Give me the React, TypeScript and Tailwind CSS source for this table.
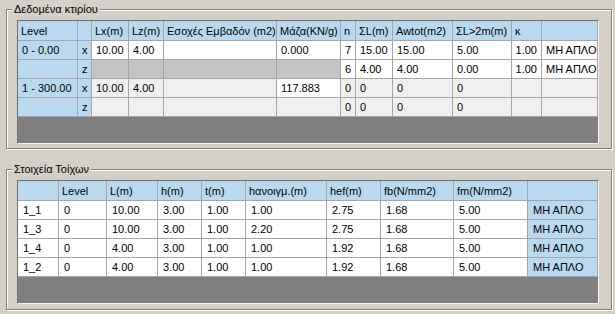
const BLUE = "bg-[#b9d9f1]";
const WHITE = "bg-white";
const GRAY = "bg-[#c4c4c4]";
const LIGHT = "bg-[#f0f0f0]";

type C = { t?: string; bg: string; right?: boolean };

const levelCols = [
  "w-[60px]",
  "w-[14px]",
  "w-[37px]",
  "w-[35px]",
  "w-[113px]",
  "w-[64px]",
  "w-[15px]",
  "w-[37px]",
  "w-[60px]",
  "w-[59px]",
  "w-[30px]",
  "w-[56px]",
];

const levelHead = ["Level", "", "Lx(m)", "Lz(m)", "Εσοχές Εμβαδόν (m2)", "Μάζα(KN/g)", "n", "ΣL(m)", "Awtot(m2)", "ΣL>2m(m)", "κ", ""];

const levelRows: C[][] = [
  [
    { t: "0 - 0.00", bg: BLUE },
    { t: "x", bg: BLUE },
    { t: "10.00", bg: WHITE },
    { t: "4.00", bg: WHITE },
    { bg: WHITE },
    { t: "0.000", bg: WHITE },
    { t: "7", bg: WHITE },
    { t: "15.00", bg: WHITE },
    { t: "15.00", bg: WHITE },
    { t: "5.00", bg: WHITE },
    { t: "1.00", bg: WHITE, right: true },
    { t: "ΜΗ ΑΠΛΟ", bg: WHITE },
  ],
  [
    { bg: BLUE },
    { t: "z", bg: BLUE },
    { bg: GRAY },
    { bg: GRAY },
    { bg: GRAY },
    { bg: GRAY },
    { t: "6", bg: WHITE },
    { t: "4.00", bg: WHITE },
    { t: "4.00", bg: WHITE },
    { t: "0.00", bg: WHITE },
    { t: "1.00", bg: WHITE, right: true },
    { t: "ΜΗ ΑΠΛΟ", bg: WHITE },
  ],
  [
    { t: "1 - 300.00", bg: BLUE },
    { t: "x", bg: BLUE },
    { t: "10.00", bg: LIGHT },
    { t: "4.00", bg: LIGHT },
    { bg: LIGHT },
    { t: "117.883", bg: WHITE },
    { t: "0", bg: LIGHT },
    { t: "0", bg: LIGHT },
    { t: "0", bg: LIGHT },
    { t: "0", bg: LIGHT },
    { bg: LIGHT },
    { bg: LIGHT },
  ],
  [
    { bg: BLUE },
    { t: "z", bg: BLUE },
    { bg: LIGHT },
    { bg: LIGHT },
    { bg: LIGHT },
    { bg: LIGHT },
    { t: "0", bg: LIGHT },
    { t: "0", bg: LIGHT },
    { t: "0", bg: LIGHT },
    { t: "0", bg: LIGHT },
    { bg: LIGHT },
    { bg: LIGHT },
  ],
];

const wallCols = [
  "w-[41px]",
  "w-[48px]",
  "w-[51px]",
  "w-[44px]",
  "w-[44px]",
  "w-[81px]",
  "w-[54px]",
  "w-[73px]",
  "w-[74px]",
  "w-[70px]",
];

const wallHead = ["", "Level", "L(m)", "h(m)", "t(m)", "hανοιγμ.(m)", "hef(m)", "fb(N/mm2)", "fm(N/mm2)", ""];

const walls = [
  ["1_1", "0", "10.00", "3.00", "1.00", "1.00", "2.75", "1.68", "5.00", "ΜΗ ΑΠΛΟ"],
  ["1_3", "0", "10.00", "3.00", "1.00", "2.20", "2.75", "1.68", "5.00", "ΜΗ ΑΠΛΟ"],
  ["1_4", "0", "4.00", "3.00", "1.00", "1.00", "1.92", "1.68", "5.00", "ΜΗ ΑΠΛΟ"],
  ["1_2", "0", "4.00", "3.00", "1.00", "1.00", "1.92", "1.68", "5.00", "ΜΗ ΑΠΛΟ"],
];

const wallRows: C[][] = walls.map((r) =>
  r.map((t, i) => ({ t, bg: i === r.length - 1 ? BLUE : WHITE }))
);

function GroupBox({ title, className, children }: { title: string; className: string; children: React.ReactNode }) {
  return (
    <div
      className={`relative w-[606px] border border-[#808080] shadow-[inset_1px_1px_0_#fff,1px_1px_0_#fff] ${className}`}
    >
      <span className="absolute left-[5px] top-[-7px] bg-[#d4d0c8] px-[2px] leading-[13px]">{title}</span>
      {children}
    </div>
  );
}

function Grid({
  cols,
  head,
  rows,
  pad,
}: {
  cols: string[];
  head: string[];
  rows: C[][];
  pad: string;
}) {
  return (
    <div className="ml-[10px] mt-[10px] flex h-[124px] w-[582px] flex-col border border-t-[#6f6f6f] border-l-[#6f6f6f] border-b-[#f4f4f4] border-r-[#f4f4f4] bg-[#808080]">
      <div className={`flex h-[20px] ${BLUE}`}>
        {head.map((h, i) => (
          <div
            key={i}
            className={`${cols[i]} flex shrink-0 items-center whitespace-nowrap border-r border-b border-[#a6a6a6] pl-[3px] pt-[2px]`}
          >
            {h}
          </div>
        ))}
      </div>
      {rows.map((r, ri) => (
        <div key={ri} className="flex h-[19px]">
          {r.map((c, i) => (
            <div
              key={i}
              className={`${cols[i]} ${c.bg} flex shrink-0 items-center whitespace-nowrap border-r border-b border-[#a6a6a6] pt-[1px] ${
                c.right ? "justify-end pr-[4px]" : pad
              }`}
            >
              {c.t}
            </div>
          ))}
        </div>
      ))}
    </div>
  );
}

export default function App() {
  return (
    <div className="h-[314px] w-[615px] overflow-hidden bg-[#d4d0c8] pl-[6px] pt-[9px] font-['Liberation_Sans',Arial,sans-serif] text-[11px] text-black">
      <GroupBox title="Δεδομένα κτιρίου" className="h-[140px]">
        <Grid cols={levelCols} head={levelHead} rows={levelRows} pad="pl-[4px]" />
      </GroupBox>
      <GroupBox title="Στοιχεία Τοίχων" className="mt-[20px] h-[141px]">
        <Grid cols={wallCols} head={wallHead} rows={wallRows} pad="pl-[5px]" />
      </GroupBox>
    </div>
  );
}
